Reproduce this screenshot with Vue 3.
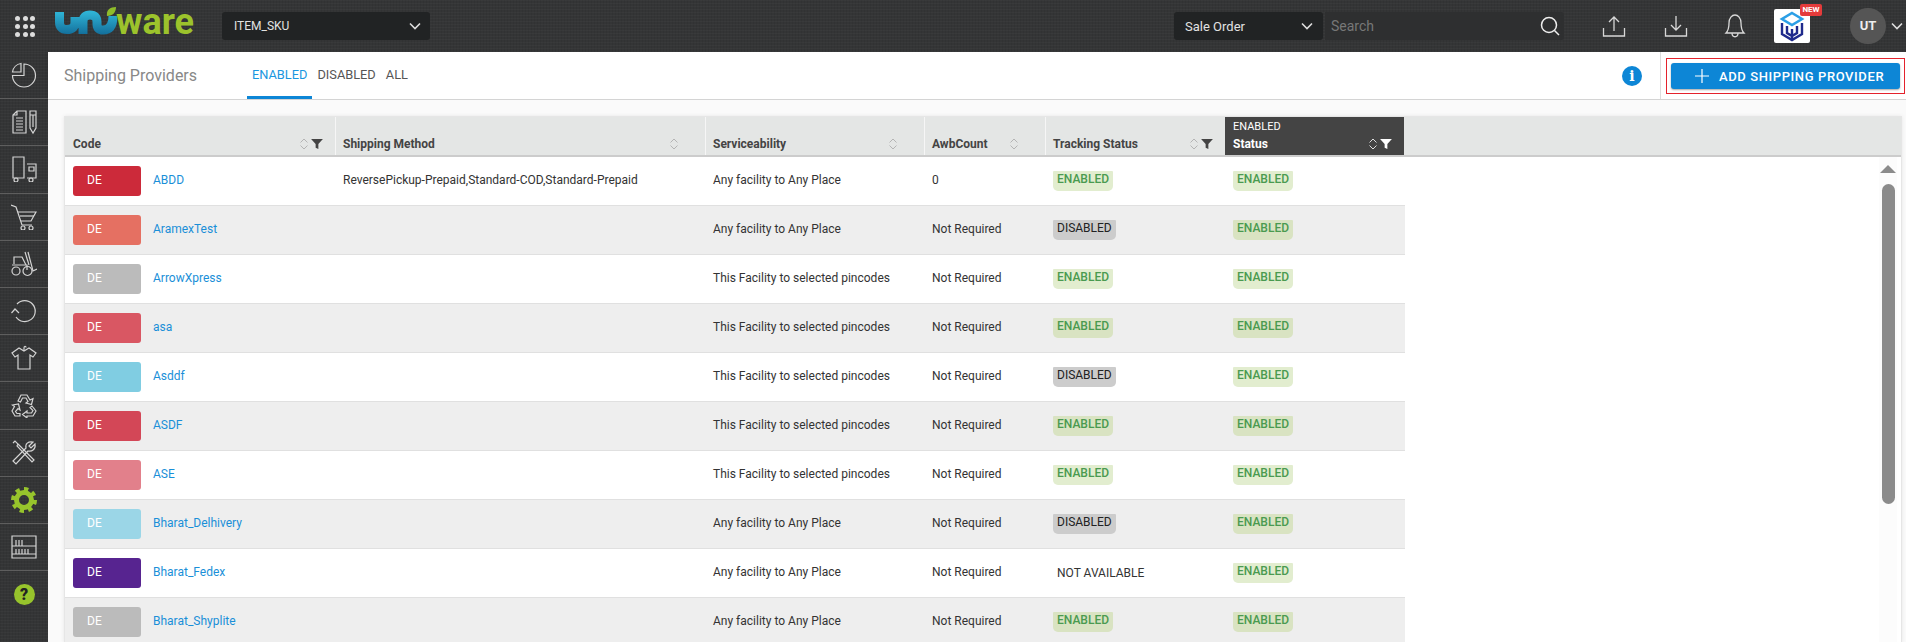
<template>
  <div class="app">
    <header class="topbar">
      <div class="apps-btn">
        <i v-for="n in 9" :key="n"></i>
      </div>
      <svg class="logo" width="150" height="60" viewBox="50 -4 150 60">
        <defs>
          <linearGradient id="logoBlue" x1="0" y1="0" x2="0" y2="1">
            <stop offset="0" stop-color="#2fb4d6" />
            <stop offset="1" stop-color="#14709c" />
          </linearGradient>
        </defs>
        <path class="logo-wave" d="M59.500 12V22Q59.500 29.500 67 29.500Q75 29.500 75 22V17M83 34V22Q83 15 90 15Q97 15 97 22V24Q97 30 103 30Q113 30 113 16" />
        <path d="M107 16C106 10 110 7 116 7C116 12 113 16 107 16Z" fill="#8fbc2b" />
        <text x="116" y="33.500" class="logo-text">ware</text>
      </svg>
      <div class="select sku-select">
        <span>ITEM_SKU</span>
        <svg width="12" height="8" viewBox="0 0 12 8"><path d="M1 1.5L6 6.5L11 1.5" /></svg>
      </div>
      <div class="search">
        <div class="select order-select">
          <span>Sale Order</span>
          <svg width="12" height="8" viewBox="0 0 12 8"><path d="M1 1.5L6 6.5L11 1.5" /></svg>
        </div>
        <div class="search-box">
          <span>Search</span>
          <svg width="20" height="20" viewBox="0 0 20 20"><circle cx="9" cy="9" r="7.5" /><path d="M14.5 14.5L19 19" /></svg>
        </div>
      </div>
      <svg class="top-icon upload" width="24" height="24" viewBox="0 0 24 24"><path d="M12 17V3M7 8L12 3L17 8M1.5 14V22H22.5V14" /></svg>
      <svg class="top-icon download" width="24" height="24" viewBox="0 0 24 24"><path d="M12 2V16M7 11L12 16L17 11M1.5 14V22H22.5V14" /></svg>
      <svg class="top-icon bell" width="22" height="26" viewBox="0 0 22 26"><path d="M2 20C4 18 5 16 5 10C5 5 8 2 11 2C14 2 17 5 17 10C17 16 18 18 20 20ZM8 20C8 25 14 25 14 20" /></svg>
      <div class="cube">
        <svg width="30" height="32" viewBox="0 0 30 32">
          <path d="M15 3L25 9L15 15L5 9Z" fill="none" stroke="#2b9fe6" stroke-width="2.6" />
          <path d="M5 13V24L15 30L25 24V13M10 16V23L15 26L20 23V16M15 19V30" fill="none" stroke="#1f2a8c" stroke-width="2.4" />
        </svg>
        <span class="new-tag">NEW</span>
      </div>
      <div class="avatar">UT</div>
      <svg class="avatar-caret" width="12" height="8" viewBox="0 0 12 8"><path d="M1 1.5L6 6.5L11 1.5" /></svg>
    </header>

    <div class="body">
      <nav class="sidebar">
        <div v-for="(item, i) in navItems" :key="i" class="nav-item">
          <svg v-if="item.paths" width="26" height="26" viewBox="0 0 26 26">
            <path v-for="(d, j) in item.paths" :key="j" :d="d" />
          </svg>
          <svg v-else-if="item.gear" class="gear" width="26" height="26" viewBox="0 0 26 26">
            <circle class="gear-teeth" cx="13" cy="13" r="11" pathLength="16" />
            <circle class="gear-ring" cx="13" cy="13" r="7.5" />
          </svg>
          <span v-else class="help">?</span>
        </div>
      </nav>

      <main class="main">
        <div class="page-head">
          <h1>Shipping Providers</h1>
          <div class="tabs">
            <a class="tab active">ENABLED</a>
            <a class="tab">DISABLED</a>
            <a class="tab">ALL</a>
          </div>
          <span class="info">i</span>
          <div class="add-wrap">
            <div class="add-frame">
              <button class="add-btn">
                <svg width="14" height="14" viewBox="0 0 14 14"><path d="M7 0V14M0 7H14" /></svg>
                ADD SHIPPING PROVIDER
              </button>
            </div>
          </div>
        </div>

        <div class="content">
          <div class="grid-card">
            <div class="grid-row head">
              <div v-for="col in columns" :key="col.label" class="th" :class="{ dark: col.applied }">
                <span v-if="col.applied" class="applied">{{ col.applied }}</span>
                <div class="th-line">
                  <span class="th-label">{{ col.label }}</span>
                  <svg class="sort" width="8" height="12" viewBox="0 0 8 12"><path d="M0.5 4.5L4 1L7.5 4.5" /><path d="M0.5 7.5L4 11L7.5 7.5" /></svg>
                  <span class="filter-slot">
                    <svg v-if="col.filter" width="12" height="10" viewBox="0 0 13 11"><path d="M0 0H13L8 5.5V11L5 9.5V5.5Z" /></svg>
                  </span>
                </div>
              </div>
            </div>
            <div class="grid-body">
              <div class="rows">
                <div v-for="row in rows" :key="row.code" class="grid-row item">
                  <div class="td code-cell">
                    <span class="de" :style="{ background: row.color }">DE</span>
                    <a class="code-link">{{ row.code }}</a>
                  </div>
                  <div class="td">{{ row.method }}</div>
                  <div class="td">{{ row.service }}</div>
                  <div class="td">{{ row.awb }}</div>
                  <div class="td pill-cell">
                    <span v-if="row.tracking === 'NOT AVAILABLE'" class="not-avail">NOT AVAILABLE</span>
                    <span v-else class="pill" :class="row.tracking.toLowerCase()">{{ row.tracking }}</span>
                  </div>
                  <div class="td pill-cell"><span class="pill enabled">ENABLED</span></div>
                </div>
              </div>
              <div class="scroll-track">
                <span class="scroll-up"></span>
                <span class="scroll-thumb"></span>
              </div>
            </div>
          </div>
        </div>
      </main>
    </div>
  </div>
</template>

<script setup>
const navItems = [
  { paths: ["M13 2A11.5 11.5 0 1 1 1.5 13.5H13Z", "M10 1.5A10 10 0 0 0 1.5 10H10Z"] },
  { paths: ["M6 2H15V24H2V6ZM2 6H6V2", "M5 9H12M5 12H12M5 15H12M5 18H12M5 21H12", "M19 2H25V19L22 24L19 19ZM19 6H25M22 6V18"] },
  { paths: ["M2 1H13V22H2Z", "M16 8H25V22H16", "M18 11H23V15H18Z", "M3 24a2 2 0 1 0 4 0a2 2 0 1 0-4 0M18 24a2 2 0 1 0 4 0a2 2 0 1 0-4 0"] },
  { paths: ["M0 1L5 3L11 21H21", "M7 8H25L20 17H10", "M9 12H23", "M10 24a2 2 0 1 0 4 0a2 2 0 1 0-4 0M18 24a2 2 0 1 0 4 0a2 2 0 1 0-4 0"] },
  { paths: ["M3 13V6H11L15 14", "M1 14H16V19", "M17 1L22 20L26 18", "M14 1L18 14", "M1 20a4 4 0 1 0 8 0a4 4 0 1 0-8 0M12 20a4.5 4.5 0 1 0 9 0a4.5 4.5 0 1 0-9 0"] },
  { paths: ["M6 6A10.5 10.5 0 1 1 5 19", "M0.5 15L4 11L8 15"] },
  { paths: ["M8 3L1 8L4 12L7 10V24H19V10L22 12L25 8L18 3L13 6Z", "M13 6V3C13 1 15 1 15 2.5"] },
  { paths: ["M7 9L10 3H16L19 8L22 6.5L20.5 12.5L15 11L17 9.5L15 6H11.5L9.5 10Z", "M21 14L25 19L22 24H16V26L11.5 22.5L16 19V21H20.5L22 18.5L19 15.5Z", "M9 24H4L1 19L3.5 14.5L1.5 13L7.5 12L9 18L7 16.5L4.5 19.5L6 21.5H9Z"] },
  { paths: ["M2 3L4 1L7 4L6 6L21 22L23 20L7 4", "M2 21L15 8C14 4 17 1 22 2L18 6L20 8L24 4C25 9 21 12 17 11L5 24Z"] },
  { gear: true },
  { paths: ["M1 2H25V24H1Z", "M1 12H25M1 20H25", "M5 6V12M8 6V12M11 6V12M5 15V20M8 15V20M11 15V20M14 15V20M17 15V20"] },
  { help: true },
];

const columns = [
  { label: "Code", filter: true },
  { label: "Shipping Method" },
  { label: "Serviceability" },
  { label: "AwbCount" },
  { label: "Tracking Status", filter: true },
  { label: "Status", filter: true, applied: "ENABLED" },
];

const anyPlace = "Any facility to Any Place";
const pincodes = "This Facility to selected pincodes";

const rows = [
  { code: "ABDD", color: "#cc2a3a", method: "ReversePickup-Prepaid,Standard-COD,Standard-Prepaid", service: anyPlace, awb: "0", tracking: "ENABLED" },
  { code: "AramexTest", color: "#e57062", method: "", service: anyPlace, awb: "Not Required", tracking: "DISABLED" },
  { code: "ArrowXpress", color: "#bbbbbb", method: "", service: pincodes, awb: "Not Required", tracking: "ENABLED" },
  { code: "asa", color: "#d95763", method: "", service: pincodes, awb: "Not Required", tracking: "ENABLED" },
  { code: "Asddf", color: "#80cde2", method: "", service: pincodes, awb: "Not Required", tracking: "DISABLED" },
  { code: "ASDF", color: "#d34757", method: "", service: pincodes, awb: "Not Required", tracking: "ENABLED" },
  { code: "ASE", color: "#e2808b", method: "", service: pincodes, awb: "Not Required", tracking: "ENABLED" },
  { code: "Bharat_Delhivery", color: "#9bd6e7", method: "", service: anyPlace, awb: "Not Required", tracking: "DISABLED" },
  { code: "Bharat_Fedex", color: "#572490", method: "", service: anyPlace, awb: "Not Required", tracking: "NOT AVAILABLE" },
  { code: "Bharat_Shyplite", color: "#bbbbbb", method: "", service: anyPlace, awb: "Not Required", tracking: "ENABLED" },
];
</script>

<style>
html,
body {
  margin: 0;
  background: #fff;
}
</style>

<style scoped>
.app {
  width: 1906px;
  height: 642px;
  overflow: hidden;
  display: flex;
  flex-direction: column;
  font-family: Roboto, "Liberation Sans", sans-serif;
  font-size: 12px;
  color: #333;
  --texture: repeating-linear-gradient(0deg, rgba(255, 255, 255, 0.025) 0 1px, transparent 1px 3px),
    repeating-linear-gradient(90deg, rgba(0, 0, 0, 0.06) 0 1px, transparent 1px 3px), #343536;
}

.topbar {
  height: 52px;
  flex: none;
  display: flex;
  align-items: center;
  background: var(--texture);
  color: #ddd;
}

.apps-btn {
  width: 20px;
  margin-left: 15px;
  display: grid;
  grid-template-columns: repeat(3, 5px);
  gap: 3px 2.5px;
}

.apps-btn i {
  width: 5px;
  height: 5px;
  border-radius: 50%;
  background: #ddd;
}

.logo {
  margin-left: 15px;
  flex: none;
}

.logo-wave {
  fill: none;
  stroke: url(#logoBlue);
  stroke-width: 9;
}

.logo-text {
  font-family: Roboto, sans-serif;
  font-weight: 700;
  font-size: 36px;
  fill: #9cc32c;
}

.select {
  height: 28px;
  background: #212324;
  border-radius: 3px;
  display: flex;
  align-items: center;
  justify-content: space-between;
  font-size: 13px;
  color: #e2e2e2;
  box-sizing: border-box;
}

.select svg path,
.avatar-caret path {
  fill: none;
  stroke: #ddd;
  stroke-width: 1.6;
}

.sku-select {
  width: 208px;
  margin-left: 22px;
  padding: 0 9px 0 12px;
  font-size: 12px;
}

.search {
  display: flex;
  margin-left: 744px;
  gap: 2px;
}

.order-select {
  width: 149px;
  padding: 0 10px 0 11px;
}

.search-box {
  width: 239px;
  height: 28px;
  box-sizing: border-box;
  padding: 0 4px 0 6px;
  background: #2e2f30;
  border-radius: 0 3px 3px 0;
  display: flex;
  align-items: center;
  justify-content: space-between;
  color: #777;
  font-size: 14px;
}

.search-box svg {
  fill: none;
  stroke: #eee;
  stroke-width: 1.5;
}

.top-icon {
  flex: none;
  fill: none;
  stroke: #d8d8d8;
  stroke-width: 1.3;
}

.upload {
  margin-left: 38px;
}

.download {
  margin-left: 38px;
}

.bell {
  margin-left: 36px;
}

.cube {
  position: relative;
  width: 36px;
  height: 34px;
  margin-left: 28px;
  background: #fff;
  border-radius: 2px;
  display: flex;
  align-items: center;
  justify-content: center;
}

.new-tag {
  position: absolute;
  top: -5px;
  right: -12px;
  width: 22px;
  height: 12px;
  background: #e43b3b;
  border-radius: 2px;
  color: #fff;
  font-size: 8px;
  font-weight: 700;
  line-height: 12px;
  text-align: center;
}

.avatar {
  width: 36px;
  height: 36px;
  margin-left: 40px;
  border-radius: 50%;
  background: #555;
  color: #eee;
  font-size: 13px;
  font-weight: 700;
  line-height: 36px;
  text-align: center;
}

.avatar-caret {
  margin-left: 5px;
}

.body {
  flex: 1;
  display: flex;
  min-height: 0;
}

.sidebar {
  width: 48px;
  flex: none;
  background: var(--texture);
}

.nav-item {
  height: 47.2px;
  box-sizing: border-box;
  border-bottom: 1px solid #5e5e5e;
  display: flex;
  align-items: center;
  justify-content: center;
}

.nav-item:last-child {
  border-bottom: 0;
}

.nav-item svg {
  fill: none;
  stroke: #d4d4d4;
  stroke-width: 1.2;
}

.gear-teeth {
  stroke: #97c42c;
  stroke-width: 4;
  stroke-dasharray: 1 1;
}

.gear-ring {
  stroke: #97c42c;
  stroke-width: 5;
}

.help {
  width: 21px;
  height: 21px;
  border-radius: 50%;
  background: #97c42c;
  color: #222;
  font-size: 16px;
  font-weight: 900;
  line-height: 21px;
  text-align: center;
}

.main {
  flex: 1;
  min-width: 0;
  display: flex;
  flex-direction: column;
  background: #fff;
}

.page-head {
  height: 48px;
  flex: none;
  box-sizing: border-box;
  display: flex;
  align-items: center;
  padding-left: 16px;
  border-bottom: 1px solid #d4d4d4;
  box-shadow: 0 1px 3px rgba(0, 0, 0, 0.15);
}

h1 {
  margin: 0;
  width: 183px;
  font-size: 16px;
  font-weight: 400;
  color: #888;
}

.tabs {
  display: flex;
  align-self: stretch;
}

.tab {
  padding: 15px 5px 0;
  box-sizing: border-box;
  font-size: 12.8px;
  color: #555;
}

.tab.active {
  color: #1a96e0;
  border-bottom: 3px solid #0d86d6;
}

.info {
  width: 20px;
  height: 20px;
  margin-left: auto;
  border-radius: 50%;
  background: #0d86d6;
  color: #fff;
  font-family: "DejaVu Serif", serif;
  font-size: 14px;
  font-weight: 700;
  line-height: 20px;
  text-align: center;
}

.add-wrap {
  align-self: stretch;
  width: 246px;
  margin-left: 18px;
  border-left: 1px solid #ddd;
  box-sizing: border-box;
  padding: 6px 1px 0 5px;
}

.add-frame {
  height: 36px;
  box-sizing: border-box;
  padding: 4px;
  border: 1px solid #e4222c;
}

.add-btn {
  width: 100%;
  height: 100%;
  padding: 0;
  border: 0;
  border-radius: 3px;
  background: #0d86d6;
  box-shadow: 0 1px 2px rgba(0, 0, 0, 0.35);
  color: #fff;
  font-family: inherit;
  font-size: 13px;
  font-weight: 500;
  letter-spacing: 0.6px;
  display: flex;
  align-items: center;
  gap: 10px;
}

.add-btn svg {
  margin-left: 24px;
  stroke: #fff;
  stroke-width: 1.2;
}

.content {
  flex: 1;
  min-height: 0;
  padding: 16px 4px 0 16px;
  background: #fafafa;
}

.grid-card {
  height: 100%;
  background: #fff;
  border: 1px solid #e6e6e6;
  border-bottom: 0;
  box-shadow: 0 0 4px rgba(0, 0, 0, 0.08);
  display: flex;
  flex-direction: column;
}

.grid-row {
  display: grid;
  grid-template-columns: 270px 370px 219px 121px 180px 179px;
}

.head {
  height: 40px;
  flex: none;
  background: #e4e6e5;
  border-bottom: 2px solid #ccc;
  box-sizing: border-box;
}

.th {
  display: flex;
  flex-direction: column;
  justify-content: flex-end;
  padding: 0 0 2px 8px;
  color: #444;
  font-weight: 700;
}

.th + .th {
  padding-left: 7px;
  border-left: 1px solid #f6f6f6;
}

.th-line {
  display: flex;
  align-items: center;
  height: 18px;
}

.th-label {
  flex: 1;
}

.th .sort {
  fill: none;
  stroke: #b4b4b4;
  stroke-width: 1;
}

.filter-slot {
  width: 24px;
  margin-left: 3px;
  display: flex;
}

.filter-slot svg {
  fill: #444;
}

.th.dark {
  background: #444;
  color: #fff;
  padding-left: 8px;
  border-left: 0;
}

.applied {
  font-size: 11px;
  font-weight: 400;
  margin-bottom: 2px;
}

.th.dark .sort {
  stroke: #ddd;
}

.th.dark .filter-slot svg {
  fill: #fff;
}

.grid-body {
  flex: 1;
  min-height: 0;
  display: flex;
  justify-content: space-between;
  overflow: hidden;
}

.rows {
  width: 1340px;
  flex: none;
}

.item {
  height: 49px;
  box-sizing: border-box;
  border-bottom: 1px solid #e0e0e0;
  background: #fff;
}

.item:nth-child(even) {
  background: #eee;
}

.td {
  display: flex;
  align-items: center;
  padding-left: 8px;
  padding-bottom: 2px;
  color: #333;
}

.code-cell {
  padding-bottom: 0;
}

.de {
  width: 68px;
  height: 30px;
  box-sizing: border-box;
  padding-left: 14px;
  border-radius: 3px;
  color: #fff;
  line-height: 28px;
}

.code-link {
  margin-left: 12px;
  margin-bottom: 2px;
  color: #1a8fd8;
}

.pill-cell {
  padding-bottom: 0;
}

.pill {
  height: 20px;
  box-sizing: border-box;
  padding: 0 4px;
  border-radius: 1px 1px 5px 5px;
  line-height: 16px;
}

.pill.enabled {
  background: #e2edcf;
  color: #4a9a50;
  font-weight: 500;
}

.item:nth-child(even) .pill.enabled {
  background: #d9e3c2;
}

.pill.disabled {
  background: #ccc;
  color: #222;
}

.not-avail {
  padding-left: 4px;
  color: #333;
}

.scroll-track {
  width: 18px;
  margin-right: 4px;
  display: flex;
  flex-direction: column;
  align-items: center;
  background: #fcfcfc;
}

.scroll-up {
  width: 0;
  height: 0;
  margin-top: 8px;
  border: 8px solid transparent;
  border-top: 0;
  border-bottom: 8px solid #8b8b8b;
}

.scroll-thumb {
  width: 13px;
  height: 320px;
  margin-top: 11px;
  border-radius: 7px;
  background: #8b8b8b;
}
</style>
